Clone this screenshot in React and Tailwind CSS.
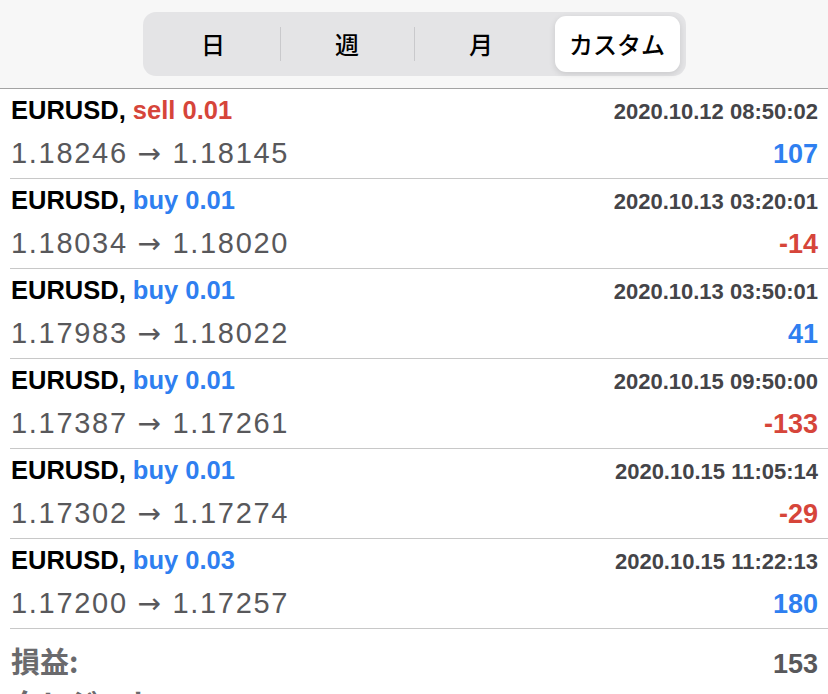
import React from 'react';

const trades = [
    { side: 'sell', lot: '0.01', time: '2020.10.12 08:50:02', open: '1.18246', close: '1.18145', profit: '107' },
    { side: 'buy', lot: '0.01', time: '2020.10.13 03:20:01', open: '1.18034', close: '1.18020', profit: '-14' },
    { side: 'buy', lot: '0.01', time: '2020.10.13 03:50:01', open: '1.17983', close: '1.18022', profit: '41' },
    { side: 'buy', lot: '0.01', time: '2020.10.15 09:50:00', open: '1.17387', close: '1.17261', profit: '-133' },
    { side: 'buy', lot: '0.01', time: '2020.10.15 11:05:14', open: '1.17302', close: '1.17274', profit: '-29' },
    { side: 'buy', lot: '0.03', time: '2020.10.15 11:22:13', open: '1.17200', close: '1.17257', profit: '180' },
];

const tabs = ['日', '週', '月', 'カスタム'];

const App = () => {
    const active = 3;

    return (
        <div className="w-[828px] h-[694px] overflow-hidden bg-white font-['Liberation_Sans','Noto_Sans_CJK_JP',sans-serif]">
            {/* period selector */}
            <div className="h-[89px] bg-[#f7f7f7] border-b border-[#a3a3a3] flex justify-center pt-[12px]">
                <div className="w-[543px] h-[64px] rounded-[13px] bg-[#e4e4e6] p-[4px] flex items-center">
                    {tabs.map((t, i) => (
                        <React.Fragment key={t}>
                            {i > 0 && (
                                <div className={`w-px h-[34px] ${i === active || i - 1 === active ? 'bg-transparent' : 'bg-[#c9c9cc]'}`}></div>
                            )}
                            <div
                                className={`h-full flex items-center justify-center text-[24px] font-medium text-black font-['Noto_Sans_CJK_JP',sans-serif] ${
                                    i === active
                                        ? 'w-[125px] flex-none bg-white rounded-[11px] shadow-[0_2px_6px_rgba(0,0,0,0.12)] ml-[6px] mr-[2px]'
                                        : 'flex-1'
                                }`}
                            >
                                {t}
                            </div>
                        </React.Fragment>
                    ))}
                </div>
            </div>

            {/* trade rows */}
            {trades.map((tr, idx) => (
                <div key={idx} className="ml-[10px] h-[90px] border-b border-[#c8c8c8] pr-[10px] pl-[1px] pt-[7px]">
                    <div className="flex justify-between items-baseline leading-[28px]">
                        <div className="text-[25.5px] font-bold text-black">
                            EURUSD,{' '}
                            <span className={tr.side === 'sell' ? 'text-[#d6453a]' : 'text-[#2f7ff0]'}>
                                {tr.side} {tr.lot}
                            </span>
                        </div>
                        <div className="text-[22px] font-bold text-[#444448]">{tr.time}</div>
                    </div>
                    <div className="flex justify-between items-baseline leading-[32px] mt-[11px]">
                        <div className="text-[29px] text-[#58585b] tracking-[1.7px]">
                            {tr.open}{' '}
                            <span className="font-['DejaVu_Sans',sans-serif] text-[28px]">→</span>{' '}
                            {tr.close}
                        </div>
                        <div className={`text-[27px] font-bold ${tr.profit.startsWith('-') ? 'text-[#d6453a]' : 'text-[#2f7ff0]'}`}>
                            {tr.profit}
                        </div>
                    </div>
                </div>
            ))}

            {/* summary */}
            <div className="ml-[10px] pr-[10px] pl-[1px] pt-[9px]">
                <div className="flex justify-between items-baseline leading-[44px]">
                    <div className="text-[29px] font-bold text-[#6a6a6d] font-['Noto_Sans_CJK_JP',sans-serif]">損益:</div>
                    <div className="text-[27px] font-bold text-[#58585b]">153</div>
                </div>
                <div className="flex justify-between items-baseline leading-[44px] -mt-[6px]">
                    <div className="text-[29px] font-bold text-[#6a6a6d] font-['Noto_Sans_CJK_JP',sans-serif]">クレジット</div>
                    <div className="text-[27px] font-bold text-[#58585b]">0</div>
                </div>
            </div>
        </div>
    );
};

export default App;
